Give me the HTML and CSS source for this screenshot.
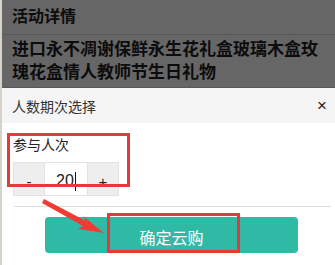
FILE: index.html
```html
<!DOCTYPE html>
<html lang="zh-CN">
<head>
<meta charset="UTF-8">
<meta name="viewport" content="width=device-width, initial-scale=1.0">
<title>人数期次选择</title>
<link rel="stylesheet" href="styles.css">
</head>
<body>
<div class="page">
    <div class="detail">
        <div class="detail-head">活动详情</div>
        <div class="detail-title">进口永不凋谢保鲜永生花礼盒玻璃木盒玫瑰花盒情人教师节生日礼物</div>
        <div class="mask"></div>
    </div>

    <div class="sheet">
        <div class="sheet-head">
            <span>人数期次选择</span>
            <span class="close">×</span>
        </div>
        <div class="sheet-body">
            <div class="label">参与人次</div>
            <div class="stepper">
                <span class="step-btn">-</span>
                <span class="step-num">20<i class="caret"></i></span>
                <span class="step-btn">+</span>
            </div>
            <div class="line"></div>
            <div class="btn-row">
                <button class="buy-btn">确定云购</button>
            </div>
        </div>

        <!-- 标注 -->
        <div class="mark mark-step"></div>
        <div class="mark mark-btn"></div>
        <svg class="arrow" width="70" height="45" viewBox="0 0 70 45">
            <path d="M2 3 L44 25 L41 20 L62 37 L36 33 L41 30 L0 7 Z" fill="#ee3c35"/>
        </svg>
    </div>
</div>
</body>
</html>
```

FILE: styles.css
```css
html, body {
    margin: 0;
    padding: 0;
    background: #fff;
    font-family: "Liberation Sans", "Noto Sans CJK SC", sans-serif;
}

.page {
    position: relative;
    width: 333px;
    height: 265px;
    border-left: 2px solid #d6d2ca;
    overflow: hidden;
}

/* 底部页面 + 遮罩 */
.detail {
    position: relative;
    color: #1e1e1e;
}

.detail-head {
    height: 34px;
    line-height: 33px;
    padding-left: 10px;
    font-size: 16px;
    font-weight: bold;
    border-bottom: 1px solid #ddd;
}

.detail-title {
    padding: 3px 8px 3px 10px;
    font-size: 17px;
    line-height: 23px;
    height: 46px;
    font-weight: bold;
    border-bottom: 1px solid #ddd;
}

.mask {
    position: absolute;
    left: -2px;
    top: 0;
    right: 0;
    bottom: 0;
    background: rgba(0, 0, 0, 0.6);
}

/* 弹出层 */
.sheet {
    position: relative;
}

.sheet-head {
    display: flex;
    justify-content: space-between;
    align-items: center;
    height: 35px;
    padding: 0 8px 0 10px;
    background: #f5f5f5;
    font-size: 14px;
    color: #333;
}

.close {
    font-size: 17px;
    color: #222;
}

.sheet-body {
    padding: 13px 0 0 11px;
}

.label {
    font-size: 14px;
    line-height: 18px;
    color: #222;
}

.stepper {
    display: flex;
    margin-top: 8px;
    height: 34px;
}

.step-btn,
.step-num {
    display: flex;
    align-items: center;
    justify-content: center;
    padding-top: 4px;
    box-sizing: border-box;
    font-size: 15px;
    color: #222;
    border: 1px solid #e3e3e3;
}

.step-btn {
    width: 32px;
    background: #eee;
}

.step-num {
    width: 42px;
    background: #fff;
    border-left: none;
    border-right: none;
    font-size: 16px;
}

.caret {
    display: inline-block;
    width: 1px;
    height: 19px;
    margin-left: 1px;
    background: #111;
}

.line {
    height: 1px;
    margin: 10px 4px 0 1px;
    background: #ddd;
}

.btn-row {
    padding: 10px 0 0 32px;
}

.buy-btn {
    display: block;
    width: 253px;
    height: 36px;
    border: none;
    border-radius: 4px;
    background: #2fbaa5;
    color: #fff;
    font-family: inherit;
    font-size: 16px;
    padding-top: 4px;
}

/* 红框标注 */
.mark {
    position: absolute;
    border: 3px solid #e5393a;
    box-sizing: border-box;
}

.mark-step {
    left: 5px;
    top: 45px;
    width: 123px;
    height: 54px;
}

.mark-btn {
    left: 105px;
    top: 125px;
    width: 133px;
    height: 40px;
}

.arrow {
    position: absolute;
    left: 40px;
    top: 108px;
}
```
